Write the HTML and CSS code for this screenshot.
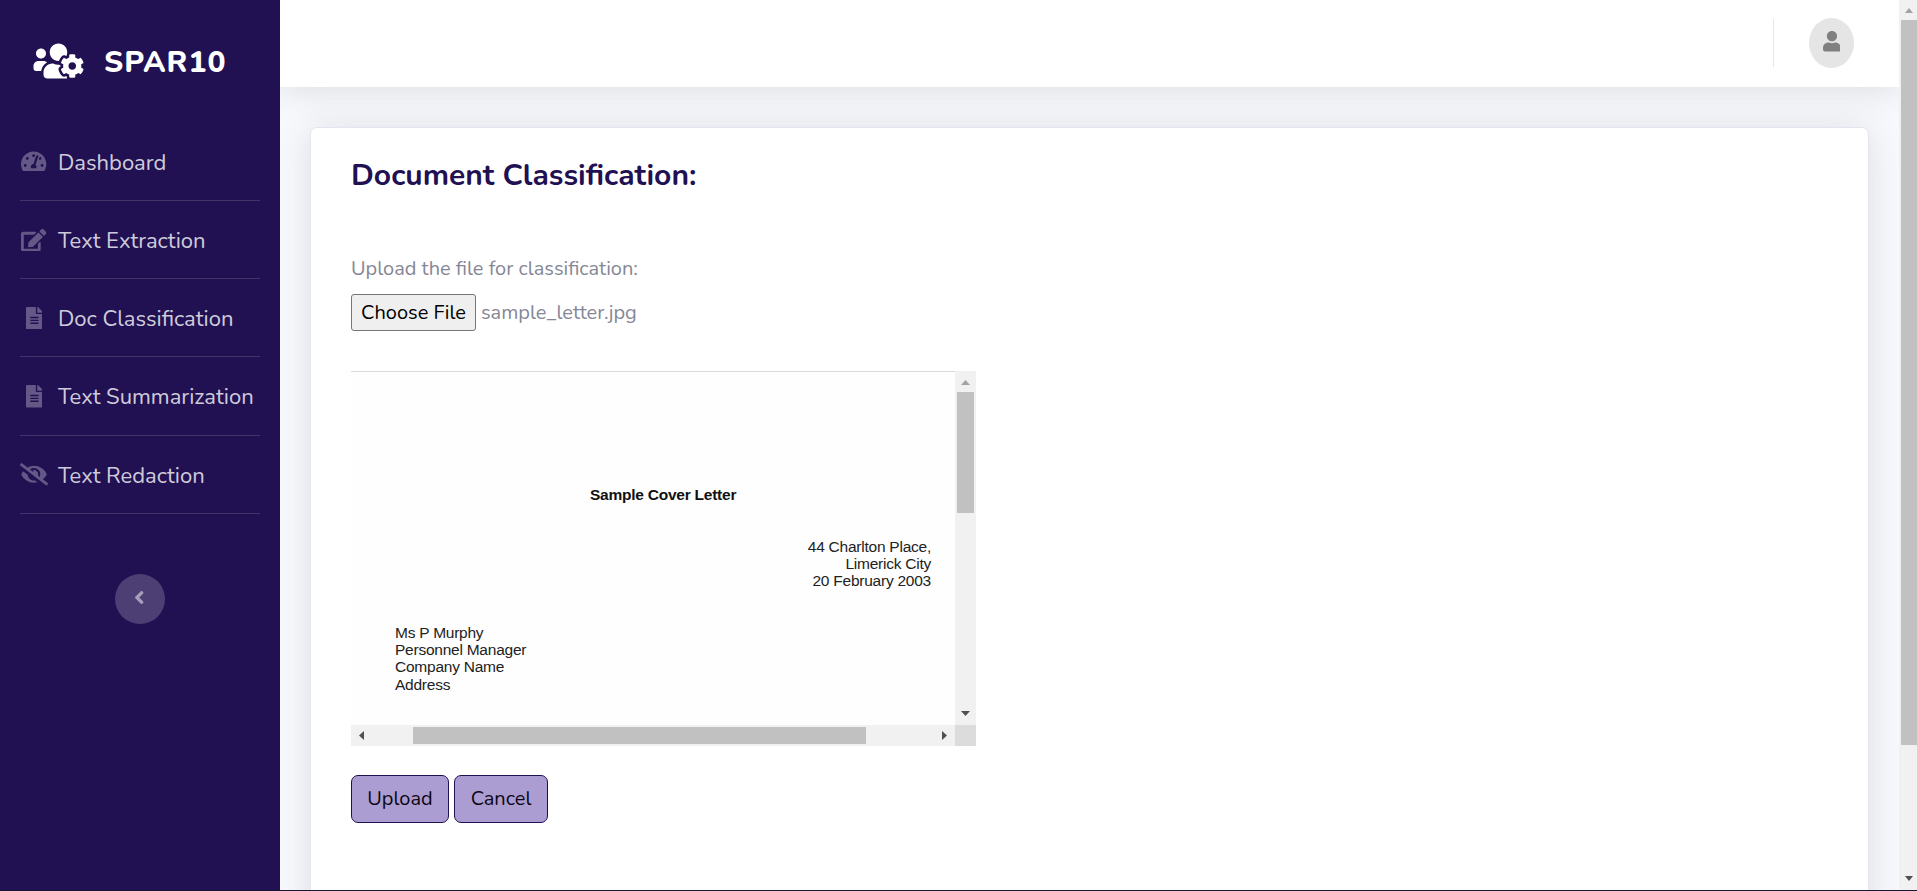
FILE: index.html
```html
<!DOCTYPE html>
<html lang="en">
<head>
<meta charset="utf-8">
<title>SPAR10 - Document Classification</title>
<link rel="stylesheet" href="styles.css">
</head>
<body>
<div class="page">
  <nav class="sidebar">
    <a class="brand">
      <svg class="brand-icon" viewBox="0 0 640 512"><path d="M610.5 341.3c2.6-14.1 2.6-28.5 0-42.6l25.8-14.9c3-1.7 4.3-5.2 3.3-8.5-6.7-21.6-18.2-41.2-33.2-57.4-2.3-2.5-6-3.1-9-1.4l-25.8 14.9c-10.9-9.3-23.4-16.5-36.9-21.3v-29.8c0-3.4-2.4-6.4-5.7-7.1-22.3-5-45-4.8-66.2 0-3.3.7-5.7 3.7-5.7 7.1v29.8c-13.5 4.8-26 12-36.9 21.3l-25.8-14.9c-2.9-1.7-6.7-1.1-9 1.4-15 16.2-26.5 35.8-33.2 57.4-1 3.3.4 6.8 3.3 8.5l25.8 14.9c-2.6 14.1-2.6 28.5 0 42.6l-25.8 14.9c-3 1.7-4.3 5.2-3.3 8.5 6.7 21.6 18.2 41.1 33.2 57.4 2.3 2.5 6 3.1 9 1.4l25.8-14.9c10.9 9.3 23.4 16.5 36.9 21.3v29.8c0 3.4 2.4 6.4 5.7 7.1 22.3 5 45 4.8 66.2 0 3.3-.7 5.7-3.7 5.7-7.1v-29.8c13.5-4.8 26-12 36.9-21.3l25.8 14.9c2.9 1.7 6.7 1.1 9-1.4 15-16.2 26.5-35.8 33.2-57.4 1-3.3-.4-6.8-3.3-8.5l-25.8-14.9zM496 368.5c-26.8 0-48.5-21.8-48.5-48.5s21.8-48.5 48.5-48.5 48.5 21.8 48.5 48.5-21.7 48.5-48.5 48.5zM96 224c35.3 0 64-28.7 64-64s-28.7-64-64-64-64 28.7-64 64 28.7 64 64 64zm224 32c1.9 0 3.7-.5 5.6-.6 8.3-21.7 20.5-42.1 36.3-59.2 7.4-8 17.9-12.6 28.9-12.6 6.9 0 13.7 1.8 19.6 5.3l7.9 4.6c.8-.5 1.6-.9 2.4-1.4 7-14.6 11.2-30.8 11.2-48 0-61.9-50.1-112-112-112S208 82.1 208 144c0 61.9 50.1 112 112 112zm105.2 194.5c-2.3-1.2-4.6-2.6-6.8-3.9-8.2 4.8-15.3 9.8-27.5 9.8-10.9 0-21.4-4.6-28.9-12.6-18.3-19.8-32.3-43.9-40.2-69.6-10.7-34.5 24.9-49.7 25.8-50.3-.1-2.6-.1-5.2 0-7.8l-7.9-4.6c-3.8-2.2-7-5-9.8-8.1-3.3.2-6.5.6-9.8.6-24.6 0-47.6-6-68.5-16h-8.3C179.6 288 128 339.6 128 403.2V432c0 26.5 21.5 48 48 48h255.4c-3.7-6-6.2-12.8-6.2-20.3v-9.2zM173.1 274.6C161.5 263.1 145.6 256 128 256H64c-35.3 0-64 28.7-64 64v32c0 17.7 14.3 32 32 32h65.9c6.3-47.4 34.9-87.3 75.2-109.4z"/></svg>
      <span class="brand-name">SPAR10</span>
    </a>
    <ul class="menu">
      <li class="item"><span class="ico"><svg viewBox="0 0 576 512"><path d="M288 32C128.94 32 0 160.94 0 320c0 52.8 14.25 102.26 39.06 144.8 5.61 9.62 16.3 15.2 27.44 15.2h443c11.14 0 21.83-5.58 27.44-15.2C561.75 422.26 576 372.8 576 320c0-159.06-128.94-288-288-288zm0 64c14.71 0 26.58 10.13 30.32 23.65-1.11 2.26-2.64 4.23-3.45 6.67l-9.22 27.67c-5.13 3.49-10.97 6.01-17.64 6.01-17.67 0-32-14.33-32-32S270.33 96 288 96zM96 384c-17.67 0-32-14.33-32-32s14.33-32 32-32 32 14.33 32 32-14.33 32-32 32zm48-160c-17.67 0-32-14.33-32-32s14.33-32 32-32 32 14.33 32 32-14.33 32-32 32zm246.77-72.41l-61.33 184C343.13 347.33 352 364.54 352 384c0 11.72-3.38 22.55-8.88 32H232.88c-5.5-9.45-8.88-20.28-8.88-32 0-33.94 26.5-61.43 59.9-63.59l61.34-184.01c4.17-12.56 17.73-19.45 30.36-15.17 12.57 4.19 19.35 17.79 15.17 30.36zm14.66 57.2l15.52-46.55c3.47-1.29 7.13-2.23 11.05-2.23 17.67 0 32 14.33 32 32s-14.33 32-32 32c-11.38-.01-20.89-6.28-26.57-15.22zM480 384c-17.67 0-32-14.33-32-32s14.33-32 32-32 32 14.33 32 32-14.33 32-32 32z"/></svg></span><span class="text">Dashboard</span></li>
      <li class="item"><span class="ico"><svg viewBox="0 0 576 512"><path d="M402.6 83.2l90.2 90.2c3.8 3.8 3.8 10 0 13.8L274.4 405.6l-92.8 10.3c-12.4 1.4-22.9-9.1-21.5-21.5l10.3-92.8L388.8 83.2c3.8-3.8 10-3.8 13.8 0zm162-22.9l-48.8-48.8c-15.2-15.2-39.9-15.2-55.2 0l-35.4 35.4c-3.8 3.8-3.8 10 0 13.8l90.2 90.2c3.8 3.8 10 3.8 13.8 0l35.4-35.4c15.2-15.3 15.2-40 0-55.2zM384 346.2V448H64V128h229.8c3.2 0 6.2-1.3 8.5-3.5l40-40c7.6-7.6 2.2-20.5-8.5-20.5H48C21.5 64 0 85.5 0 112v352c0 26.5 21.5 48 48 48h352c26.5 0 48-21.5 48-48V306.2c0-10.7-12.9-16-20.5-8.5l-40 40c-2.2 2.3-3.5 5.3-3.5 8.5z"/></svg></span><span class="text">Text Extraction</span></li>
      <li class="item"><span class="ico"><svg viewBox="0 0 384 512"><path d="M224 136V0H24C10.7 0 0 10.7 0 24v464c0 13.3 10.7 24 24 24h336c13.3 0 24-10.7 24-24V160H248c-13.2 0-24-10.8-24-24zm64 236c0 6.6-5.4 12-12 12H108c-6.6 0-12-5.4-12-12v-8c0-6.6 5.4-12 12-12h168c6.6 0 12 5.4 12 12v8zm0-64c0 6.6-5.4 12-12 12H108c-6.6 0-12-5.4-12-12v-8c0-6.6 5.4-12 12-12h168c6.6 0 12 5.4 12 12v8zm0-72v8c0 6.6-5.4 12-12 12H108c-6.6 0-12-5.4-12-12v-8c0-6.6 5.4-12 12-12h168c6.6 0 12 5.4 12 12zm96-114.1v6.1H256V0h6.1c6.4 0 12.5 2.5 17 7l97.9 98c4.5 4.5 7 10.6 7 16.9z"/></svg></span><span class="text">Doc Classification</span></li>
      <li class="item"><span class="ico"><svg viewBox="0 0 384 512"><path d="M224 136V0H24C10.7 0 0 10.7 0 24v464c0 13.3 10.7 24 24 24h336c13.3 0 24-10.7 24-24V160H248c-13.2 0-24-10.8-24-24zm64 236c0 6.6-5.4 12-12 12H108c-6.6 0-12-5.4-12-12v-8c0-6.6 5.4-12 12-12h168c6.6 0 12 5.4 12 12v8zm0-64c0 6.6-5.4 12-12 12H108c-6.6 0-12-5.4-12-12v-8c0-6.6 5.4-12 12-12h168c6.6 0 12 5.4 12 12v8zm0-72v8c0 6.6-5.4 12-12 12H108c-6.6 0-12-5.4-12-12v-8c0-6.6 5.4-12 12-12h168c6.6 0 12 5.4 12 12zm96-114.1v6.1H256V0h6.1c6.4 0 12.5 2.5 17 7l97.9 98c4.5 4.5 7 10.6 7 16.9z"/></svg></span><span class="text">Text Summarization</span></li>
      <li class="item"><span class="ico"><svg viewBox="0 0 640 512"><path d="M320 400c-75.85 0-137.25-58.71-142.9-133.11L72.2 185.82c-13.79 17.3-26.48 35.59-36.72 55.59a32.35 32.35 0 0 0 0 29.19C89.71 376.41 197.07 448 320 448c26.91 0 52.87-4 77.89-10.46L346 397.39a144.13 144.13 0 0 1-26 2.61zm313.82 58.1l-110.55-85.44a331.25 331.25 0 0 0 81.25-102.07 32.35 32.35 0 0 0 0-29.19C550.29 135.59 442.93 64 320 64a308.15 308.15 0 0 0-147.32 37.7L45.46 3.37A16 16 0 0 0 23 6.18L3.37 31.45A16 16 0 0 0 6.18 53.9l588.36 454.73a16 16 0 0 0 22.46-2.81l19.64-25.27a16 16 0 0 0-2.82-22.45zm-183.72-142l-39.3-30.38A94.75 94.75 0 0 0 416 256a94.76 94.76 0 0 0-121.31-92.21A47.65 47.65 0 0 1 304 192a46.64 46.64 0 0 1-1.54 10l-73.61-56.89A142.31 142.31 0 0 1 320 112a143.92 143.92 0 0 1 144 144c0 21.63-5.29 41.79-13.9 60.11z"/></svg></span><span class="text">Text Redaction</span></li>
    </ul>
    <button class="toggle"><svg viewBox="0 0 256 512"><path d="M31.7 239l136-136c9.4-9.4 24.6-9.4 33.9 0l22.6 22.6c9.4 9.4 9.4 24.6 0 33.9L127.9 256l96.4 96.4c9.4 9.4 9.4 24.6 0 33.9L201.7 409c-9.4 9.4-24.6 9.4-33.9 0l-136-136c-9.5-9.4-9.5-24.6-.1-34z"/></svg></button>
  </nav>
  <div class="content">
    <header class="topbar">
      <span class="rule"></span>
      <span class="avatar"><svg viewBox="0 0 448 512"><path d="M224 256c70.7 0 128-57.3 128-128S294.7 0 224 0 96 57.3 96 128s57.3 128 128 128zm89.6 32h-16.7c-22.2 10.2-46.9 16-72.9 16s-50.6-5.8-72.9-16h-16.7C60.2 288 0 348.2 0 422.4V464c0 26.5 21.5 48 48 48h352c26.5 0 48-21.5 48-48v-41.6c0-74.2-60.2-134.4-134.4-134.4z"/></svg></span>
    </header>
    <main class="card">
      <h1 class="title">Document Classification:</h1>
      <p class="label">Upload the file for classification:</p>
      <div class="file"><button class="choose">Choose File</button><span>sample_letter.jpg</span></div>
      <div class="preview">
        <div class="letter">
          <p class="heading">Sample Cover Letter</p>
          <p class="sender">44 Charlton Place,<br>Limerick City<br>20 February 2003</p>
          <p class="recipient">Ms P Murphy<br>Personnel Manager<br>Company Name<br>Address</p>
        </div>
        <div class="vbar">
          <svg class="arrow" viewBox="0 0 21 21"><path fill="#a3a3a3" d="M6 14h9l-4.500-5z"/></svg>
          <span class="vthumb"></span>
          <svg class="arrow" viewBox="0 0 21 21"><path d="M6 7h9l-4.500 5z"/></svg>
        </div>
        <div class="hbar">
          <svg class="arrow" viewBox="0 0 21 21"><path d="M13 6v9l-5-4.500z"/></svg>
          <span class="hthumb"></span>
          <svg class="arrow" viewBox="0 0 21 21"><path d="M8 6v9l5-4.500z"/></svg>
        </div>
        <div class="corner"></div>
      </div>
      <div class="actions"><button class="btn btn-up">Upload</button><button class="btn btn-cancel">Cancel</button></div>
    </main>
  </div>
  <div class="scroll">
    <svg class="sarrow" viewBox="0 0 18 20"><path fill="#a3a3a3" d="M6 13h8l-4-5z"/></svg>
    <span class="sthumb"></span>
    <svg class="sarrow" viewBox="0 0 18 20"><path d="M6 6h8l-4 5z"/></svg>
  </div>
</div>
</body>
</html>
```
FILE: styles.css
```css
* { box-sizing: border-box; }
body { margin: 0; height: 891px; overflow: hidden; font: 20px/30px Nunito, Lato, "Open Sans", sans-serif; color: #858796; background: #1b1733; }
p, h1, ul { margin: 0; padding: 0; }
button { font: inherit; margin: 0; }
svg { display: block; fill: currentColor; }
.page { display: flex; height: 890px; overflow: hidden; background: #f8f9fc; }

.sidebar { width: 280px; flex: none; background: #211052; position: relative; z-index: 2; display: flex; flex-direction: column; }
.brand { display: flex; align-items: center; height: 122.6px; padding-left: 33px; color: #fff; }
.brand-icon { width: 51px; height: 40px; }
.brand-name { margin-left: 20px; padding-top: 3px; font-size: 30px; font-weight: 800; letter-spacing: 1px; }
.menu { list-style: none; padding: 0 20px; }
.item { display: flex; align-items: center; height: 78.25px; padding-top: 1px; border-bottom: 1px solid rgba(255,255,255,.15); color: rgba(255,255,255,.8); font-size: 22px; white-space: nowrap; }
.text { padding-top: 2px; }
.ico { width: 28px; margin-right: 10px; display: flex; justify-content: center; color: rgba(255,255,255,.3); flex: none; }
.ico svg { height: 22.5px; }
.toggle { width: 50px; height: 50px; margin: 60.2px 0 0 115px; border: 0; border-radius: 50%; background: rgba(255,255,255,.2); color: rgba(255,255,255,.5); padding: 0 2px 3px 0; display: flex; align-items: center; justify-content: center; }
.toggle svg { height: 21px; }

.content { flex: 1; display: flex; flex-direction: column; }
.topbar { height: 87px; flex: none; background: #fff; box-shadow: 0 3px 35px rgba(58,59,69,.15); display: flex; align-items: center; justify-content: flex-end; padding: 0 45px 2px 0; }
.rule { width: 1px; height: 48px; background: #e3e6f0; margin-right: 35px; }
.avatar { width: 45px; height: 50px; border-radius: 50%; background: #e5e5e5; color: #808080; display: flex; align-items: center; justify-content: center; padding-bottom: 2px; }
.avatar svg { height: 20.5px; }
.card { width: 1559px; height: 900px; flex: none; margin: 40px 0 0 30px; padding: 30px 40px; background: #fff; border: 1px solid #e3e6f0; border-radius: 7px; box-shadow: 0 3px 35px rgba(58,59,69,.15); }
.title { font-size: 30px; line-height: 36px; font-weight: 700; color: #211052; white-space: nowrap; }
.label { margin-top: 60px; }
.file { margin-top: 10px; height: 37px; display: flex; align-items: center; }
.choose { width: 125px; height: 37px; padding: 0; border: 1px solid #767676; border-radius: 3px; background: #efefef; color: #000; margin-right: 5px; white-space: nowrap; }

.preview { margin-top: 40px; width: 625px; height: 375px; display: grid; grid-template: 354px 21px / 604px 21px; color: #505050; }
.letter { border-top: 1px solid #dadada; background: #fefefe; color: #222; font: 15.5px/17px "Liberation Sans", Arial, sans-serif; letter-spacing: -.24px; padding: 114px 24px 0 44px; overflow: hidden; }
.heading { width: 146px; margin-left: 195px; font-weight: bold; color: #111; white-space: nowrap; }
.sender { margin-top: 35px; text-align: right; }
.recipient { margin-top: 35px; line-height: 17.2px; }
.vbar { background: #f1f1f1; display: flex; flex-direction: column; }
.hbar { background: #f1f1f1; display: flex; }
.arrow { width: 21px; height: 21px; flex: none; }
.vthumb { width: 17px; height: 121px; margin: 0 2px auto; background: #c1c1c1; }
.hthumb { width: 453px; height: 17px; margin: 2px auto 2px 41px; background: #c1c1c1; }
.corner { background: #dcdcdc; }

.actions { display: flex; gap: 5px; margin-top: 29px; }
.btn { height: 48px; padding: 0; border: 1px solid #211052; border-radius: 7px; background: #ab9dd1; color: #0d0717; }
.btn-up { width: 98px; }
.btn-cancel { width: 94px; }

.scroll { width: 18px; flex: none; background: #f1f1f1; display: flex; flex-direction: column; position: relative; z-index: 3; color: #505050; }
.sarrow { width: 18px; height: 20px; flex: none; }
.sthumb { width: 16px; height: 725px; margin: 0 0 auto 2px; background: #c1c1c1; }
```
